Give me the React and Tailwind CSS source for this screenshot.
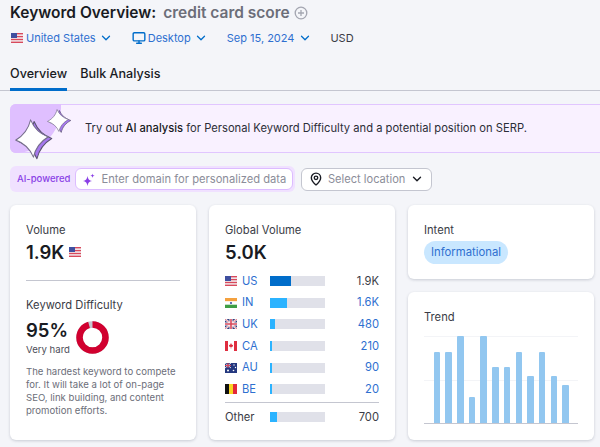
import { ChevronDown, Monitor, MapPin } from "lucide-react";

const countries = [
  { code: "US", width: "w-[21px]", bar: "bg-[#006dca]", value: "1.9K", dark: true },
  { code: "IN", width: "w-[17px]", bar: "bg-[#2bb3ff]", value: "1.6K" },
  { code: "UK", width: "w-[5px]", bar: "bg-[#2bb3ff]", value: "480" },
  { code: "CA", width: "w-[2px]", bar: "bg-[#2bb3ff]", value: "210" },
  { code: "AU", width: "w-[2px]", bar: "bg-[#2bb3ff]", value: "90" },
  { code: "BE", width: "w-[2px]", bar: "bg-[#2bb3ff]", value: "20" },
];

const trend = [
  [0, 6, 71],
  [11, 7, 71],
  [23, 7, 87],
  [35, 6, 26],
  [46, 7, 87],
  [58, 7, 56],
  [70, 6, 56],
  [82, 6, 71],
  [93, 7, 47],
  [105, 6, 71],
  [117, 6, 47],
  [128, 7, 38],
];

function Flag({ code }) {
  return (
    <svg width="12" height="10" viewBox="0 0 12 10" className="shrink-0">
      {code === "US" && (
        <>
          <rect width="12" height="10" fill="#f4f4f6" />
          <rect y="0" width="12" height="1.4" fill="#d8495c" />
          <rect y="2.9" width="12" height="1.4" fill="#d8495c" />
          <rect y="5.8" width="12" height="1.4" fill="#d8495c" />
          <rect y="8.6" width="12" height="1.4" fill="#d8495c" />
          <rect width="6" height="5" fill="#3f4f9f" />
        </>
      )}
      {code === "IN" && (
        <>
          <rect width="12" height="3.4" fill="#f4a13f" />
          <rect y="3.4" width="12" height="3.3" fill="#ffffff" />
          <rect y="6.7" width="12" height="3.3" fill="#3f9e45" />
          <circle cx="6" cy="5" r="1.1" fill="#3f4f9f" />
        </>
      )}
      {code === "UK" && (
        <>
          <rect width="12" height="10" fill="#34407f" />
          <path d="M0 0L12 10M12 0L0 10" stroke="#fff" strokeWidth="2" />
          <path d="M0 0L12 10M12 0L0 10" stroke="#d8495c" strokeWidth="0.7" />
          <path d="M6 0V10M0 5H12" stroke="#fff" strokeWidth="3" />
          <path d="M6 0V10M0 5H12" stroke="#d8495c" strokeWidth="1.6" />
        </>
      )}
      {code === "CA" && (
        <>
          <rect width="12" height="10" fill="#ffffff" />
          <rect width="3" height="10" fill="#df2d3f" />
          <rect x="9" width="3" height="10" fill="#df2d3f" />
          <path d="M6 2L7 4L8.2 3.8L7.6 5.8L6.3 6V7.6H5.7V6L4.4 5.8L3.8 3.8L5 4Z" fill="#df2d3f" />
        </>
      )}
      {code === "AU" && (
        <>
          <rect width="12" height="10" fill="#24387f" />
          <path d="M0 0L6 5M6 0L0 5" stroke="#fff" strokeWidth="0.8" />
          <path d="M3 0V5M0 2.5H6" stroke="#e0475a" strokeWidth="1" />
          <circle cx="9" cy="2" r="0.7" fill="#fff" />
          <circle cx="10.5" cy="4.5" r="0.7" fill="#fff" />
          <circle cx="8.5" cy="7.5" r="0.8" fill="#fff" />
          <circle cx="3" cy="7.5" r="1" fill="#fff" />
        </>
      )}
      {code === "BE" && (
        <>
          <rect width="4" height="10" fill="#111111" />
          <rect x="4" width="4" height="10" fill="#f8d423" />
          <rect x="8" width="4" height="10" fill="#e3283b" />
        </>
      )}
    </svg>
  );
}

function Sparkle({ x, y, width, height }) {
  const d = "M12 0.5C14 6 17.5 9.5 23.5 12C17.5 14.5 14 18 12 23.5C10 18 6.5 14.5 0.5 12C6.5 9.5 10 6 12 0.5Z";
  return (
    <g transform={`translate(${x} ${y}) scale(${width / 24} ${height / 24}) rotate(-5 12 12)`}>
      <path d={d} transform="translate(2.4 1.2)" fill="#a678ee" stroke="#57506d" strokeWidth="0.7" strokeLinejoin="round" />
      <path d={d} fill="#ffffff" stroke="#77708c" strokeWidth="0.7" strokeLinejoin="round" />
    </g>
  );
}

function Card({ className, children }) {
  return (
    <div className={`rounded-md bg-white shadow-[0_1px_3px_rgba(30,40,70,0.2)] ${className}`}>{children}</div>
  );
}

export default function App() {
  return (
    <div className="h-[447px] w-[600px] overflow-hidden bg-[#f4f5f9] font-['Inter',sans-serif] text-[#191b23]">
      {/* Header */}
      <div className="flex h-[25px] items-end pl-[10px] text-[15.5px] font-semibold leading-[24px]">
        <span>Keyword Overview:</span>
        <span className="ml-[7px] text-[#6c6e79]">credit card score</span>
        <svg width="14" height="14" viewBox="0 0 14 14" className="mb-[5px] ml-[4px]">
          <circle cx="7" cy="7" r="5.8" fill="none" stroke="#a4a6b1" strokeWidth="1.3" />
          <path d="M7 4V10M4 7H10" stroke="#a4a6b1" strokeWidth="1.3" />
        </svg>
      </div>

      <div className="mt-[4px] flex h-[18px] items-center pl-[11px] text-[11px] text-[#2e6fd0]">
        <Flag code="US" />
        <span className="ml-[3px]">United States</span>
        <ChevronDown size={14} strokeWidth={2.2} className="ml-[3px] text-[#006dca]" />
        <Monitor size={14} strokeWidth={2.4} className="ml-[19px] text-[#006dca]" />
        <span className="ml-[2px]">Desktop</span>
        <ChevronDown size={14} strokeWidth={2.2} className="ml-[3px] text-[#006dca]" />
        <span className="ml-[19px]">Sep 15, 2024</span>
        <ChevronDown size={14} strokeWidth={2.2} className="ml-[4px] text-[#006dca]" />
        <span className="ml-[18px] text-[#3a3c46]">USD</span>
      </div>

      {/* Tabs */}
      <div className="mt-[12px] flex h-[32px] gap-[13px] border-b border-[#c4c6d0] pl-[10px] text-[12.6px] font-medium leading-[30px]">
        <div className="h-[32px] border-b-[3px] border-[#006dca]">Overview</div>
        <div>Bulk Analysis</div>
      </div>

      {/* Banner */}
      <div className="relative ml-[10px] mt-[13px] flex h-[49px] items-center rounded-l-md border-y border-[#e1c6ff] bg-[#f9f1ff] pl-[75px] text-[11.2px] text-[#2c2e38]">
        <div className="absolute left-0 top-[-1px] h-[49px] w-[51px] rounded-l-md rounded-br-[48px] bg-[#dfbfff]" />
        <svg width="60" height="56" viewBox="0 0 60 56" className="absolute left-[3px] top-[-1px] overflow-visible">
          <Sparkle x={2} y={15} width={34} height={39} />
          <Sparkle x={34} y={5} width={22} height={23} />
        </svg>
        <span className="relative">
          Try out <span className="font-medium text-[#191b23]">AI analysis</span> for Personal Keyword Difficulty and a
          potential position on SERP.
        </span>
      </div>

      {/* Filters */}
      <div className="ml-[10px] mt-[13px] flex items-center gap-[6px]">
        <div className="flex h-[26px] w-[285px] items-center rounded-md bg-[#f0e1ff] pl-[7px] pr-[2px]">
          <span className="whitespace-nowrap text-[9.5px] font-medium text-[#8a3fe6]">AI-powered</span>
          <div className="ml-[5px] flex h-[22px] flex-1 items-center whitespace-nowrap rounded-md border border-[#dcbcff] bg-white pl-[7px] text-[11.2px] text-[#8b8d99]">
            <svg width="12" height="13" viewBox="0 0 12 13" className="mr-[6px] shrink-0" fill="#8a3fe6">
              <path d="M4.5 3C5 6 6 7.5 9 8C6 8.5 5 10 4.5 13C4 10 3 8.5 0 8C3 7.5 4 6 4.5 3Z" />
              <path d="M9.5 0.5C9.7 2 10.2 2.5 11.7 2.8C10.2 3 9.7 3.5 9.5 5C9.3 3.5 8.8 3 7.3 2.8C8.8 2.5 9.3 2 9.5 0.5Z" />
            </svg>
            Enter domain for personalized data
          </div>
        </div>
        <div className="flex h-[23px] w-[131px] items-center whitespace-nowrap rounded-md border border-[#c4c6d0] bg-white pl-[7px] text-[11.1px] text-[#8b8d99]">
          <MapPin size={14} strokeWidth={2.4} className="text-[#191b23]" />
          <span className="ml-[5px]">Select location</span>
          <ChevronDown size={14} strokeWidth={2.4} className="ml-[5px] text-[#191b23]" />
        </div>
      </div>

      {/* Cards */}
      <div className="ml-[10px] mt-[13px] grid w-[584px] grid-cols-[186px_186px_186px] gap-[13px]">
        <Card className="h-[235px] px-[16px] pt-[17px]">
          <div className="text-[11.2px] leading-[16px] text-[#3a3c46]">Volume</div>
          <div className="mt-[2px] flex items-center gap-[5px] text-[18.5px] font-semibold leading-[24px]">
            1.9K <Flag code="US" />
          </div>
          <div className="mt-[16px] h-px bg-[#c4c6d0]" />
          <div className="mt-[16px] text-[11.2px] leading-[16px] text-[#3a3c46]">Keyword Difficulty</div>
          <div className="mt-[5px] flex items-center gap-[6px]">
            <div>
              <div className="text-[18.5px] font-semibold leading-[24px]">95%</div>
              <div className="mt-[1px] text-[9.6px] leading-[14px] text-[#4b4d58]">Very hard</div>
            </div>
            <svg width="33" height="33" viewBox="0 0 33 33">
              <circle cx="16.5" cy="16.5" r="13" fill="none" stroke="#c4c6d0" strokeWidth="6.5" />
              <circle
                cx="16.5"
                cy="16.5"
                r="13"
                fill="none"
                stroke="#d1002f"
                strokeWidth="6.5"
                strokeDasharray="77.6 81.7"
                transform="rotate(-90 16.5 16.5)"
              />
            </svg>
          </div>
          <p className="mt-[8px] text-[9.6px] leading-[13px] text-[#6c6e79]">
            The hardest keyword to compete for. It will take a lot of on-page SEO, link building, and content promotion
            efforts.
          </p>
        </Card>

        <Card className="h-[235px] px-[16px] pt-[17px]">
          <div className="text-[11.2px] leading-[16px] text-[#3a3c46]">Global Volume</div>
          <div className="mt-[2px] text-[18.5px] font-semibold leading-[24px]">5.0K</div>
          <div className="mt-[9px] flex flex-col gap-[5.7px]">
            {countries.map((c) => (
              <div key={c.code} className="flex h-[16px] items-center text-[11.2px]">
                <Flag code={c.code} />
                <span className="ml-[5px] w-[28px] text-[#2e6fd0]">{c.code}</span>
                <div className="h-[10px] w-[55px] bg-[#e0e1e9]">
                  <div className={`h-full ${c.width} ${c.bar}`} />
                </div>
                <span className={`ml-auto ${c.dark ? "text-[#3a3c46]" : "text-[#2e6fd0]"}`}>{c.value}</span>
              </div>
            ))}
          </div>
          <div className="mt-[5px] h-px bg-[#c4c6d0]" />
          <div className="mt-[6px] flex h-[16px] items-center text-[11.2px] text-[#3a3c46]">
            <span className="w-[45px]">Other</span>
            <div className="h-[10px] w-[55px] bg-[#e0e1e9]">
              <div className="h-full w-[7px] bg-[#2bb3ff]" />
            </div>
            <span className="ml-auto">700</span>
          </div>
        </Card>

        <div className="flex flex-col gap-[13px]">
          <Card className="h-[74px] px-[16px] pt-[17px]">
            <div className="text-[11.2px] leading-[16px] text-[#3a3c46]">Intent</div>
            <div className="mt-[3px] inline-block h-[23px] rounded-full bg-[#c9e7ff] px-[7px] text-[11.3px] leading-[23px] text-[#2e6fd0]">
              Informational
            </div>
          </Card>
          <Card className="h-[148px] px-[16px] pt-[17px]">
            <div className="text-[11.2px] leading-[16px] text-[#3a3c46]">Trend</div>
            <svg width="154" height="90" viewBox="0 0 154 90" className="mt-[11px]">
              <path d="M0 0.5H154M0 44.5H154" stroke="#f3f4f7" strokeWidth="1" />
              {trend.map(([x, w, h]) => (
                <path
                  key={x}
                  d={`M${10 + x} 87V${87 - h + 1}q0 -1 1 -1H${9 + x + w}q1 0 1 1V87Z`}
                  fill="#92c7f0"
                />
              ))}
              <path d="M0 87.5H154" stroke="#c4c6d0" strokeWidth="1" />
            </svg>
          </Card>
        </div>
      </div>
    </div>
  );
}
